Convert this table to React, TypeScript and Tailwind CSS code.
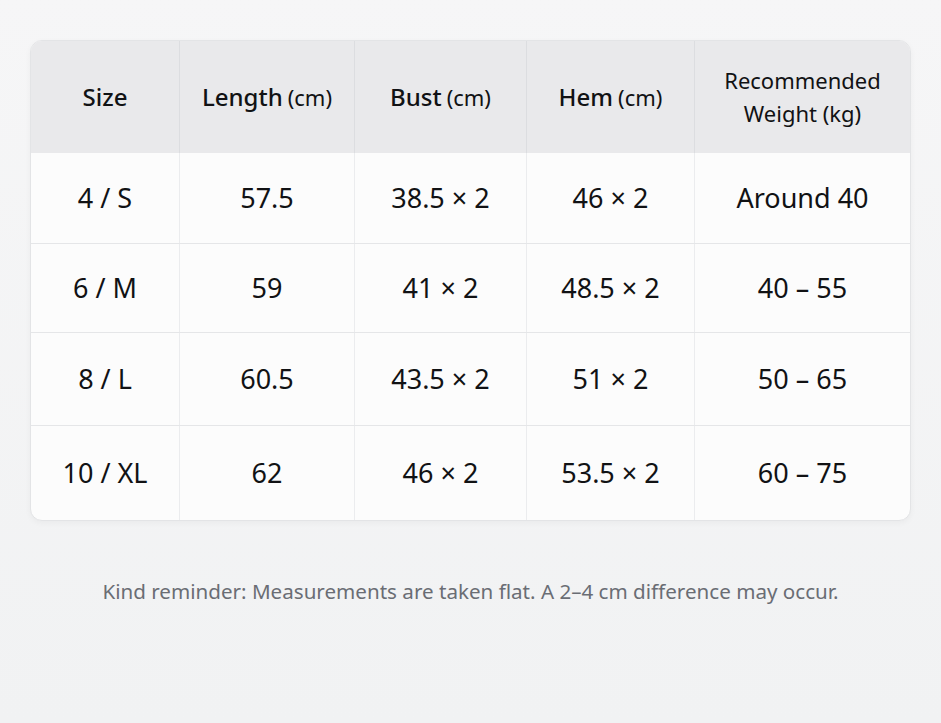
const headers = [
  { main: "Size", unit: "" },
  { main: "Length", unit: "(cm)" },
  { main: "Bust", unit: "(cm)" },
  { main: "Hem", unit: "(cm)" },
];

const rows = [
  { h: "h-[90px]", cells: ["4 / S", "57.5", "38.5 × 2", "46 × 2", "Around 40"] },
  { h: "h-[89px]", cells: ["6 / M", "59", "41 × 2", "48.5 × 2", "40 – 55"] },
  { h: "h-[93px]", cells: ["8 / L", "60.5", "43.5 × 2", "51 × 2", "50 – 65"] },
  { h: "h-[95px]", cells: ["10 / XL", "62", "46 × 2", "53.5 × 2", "60 – 75"] },
];

const cols = "grid grid-cols-[149px_175px_172px_168px_1fr]";

export default function App() {
  return (
    <div className="w-[941px] h-[723px] bg-gradient-to-b from-[#f6f6f7] to-[#f1f2f3] font-['Noto_Sans',sans-serif] text-[#111214] pt-[40px] px-[30px]">
      <div className="w-[881px] rounded-[12px] border border-[#e3e4e6] bg-[#fcfcfc] overflow-hidden shadow-[0_2px_6px_rgba(0,0,0,0.04)]">
        <div className={`${cols} h-[112px] bg-[#e9e9eb]`}>
          {headers.map((h, i) => (
            <div key={i} className="flex items-center justify-center border-r border-[#dcdde0] text-[24px]">
              <span className="font-medium">{h.main}</span>
              {h.unit && <span className="ml-[5px] text-[22px]">{h.unit}</span>}
            </div>
          ))}
          <div className="flex flex-col items-center justify-center text-[22px] leading-[33px]">
            <span>Recommended</span>
            <span>Weight (kg)</span>
          </div>
        </div>
        {rows.map((r, ri) => (
          <div key={ri} className={`${cols} ${r.h} ${ri > 0 ? "border-t border-[#e5e6e8]" : ""}`}>
            {r.cells.map((c, ci) => (
              <div
                key={ci}
                className={`flex items-center justify-center text-[27px] ${ci < 4 ? "border-r border-[#ebecee]" : ""}`}
              >
                {c}
              </div>
            ))}
          </div>
        ))}
      </div>
      <p className="mt-[55px] text-center text-[20.6px] text-[#6a6d74]">
        Kind reminder: Measurements are taken flat. A 2–4 cm difference may occur.
      </p>
    </div>
  );
}
